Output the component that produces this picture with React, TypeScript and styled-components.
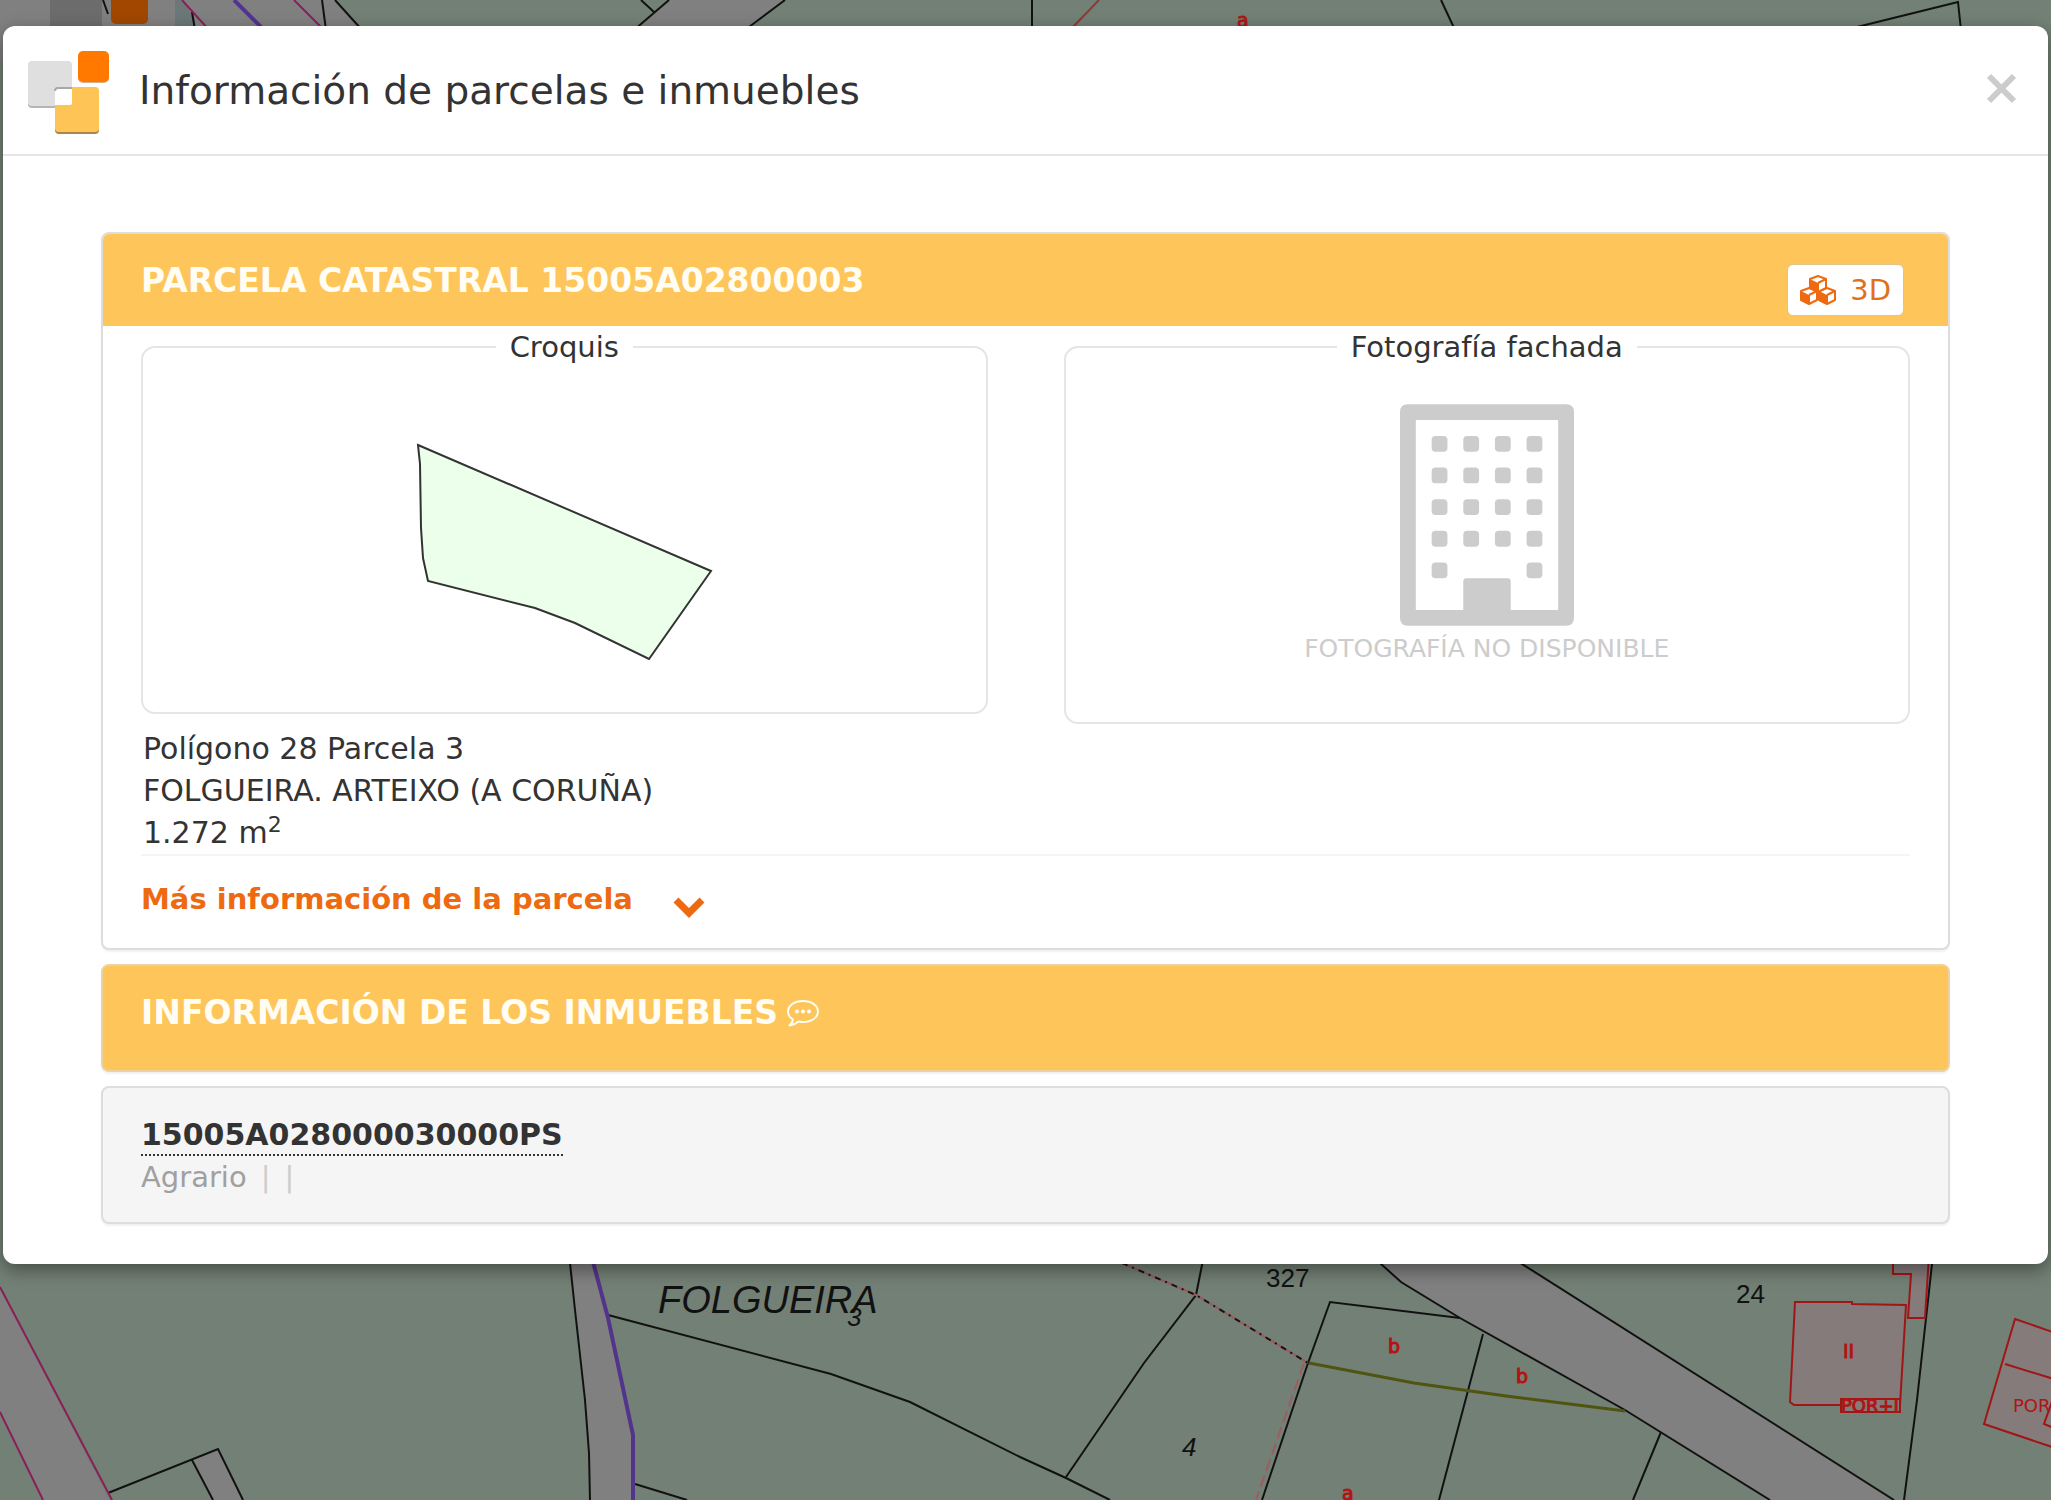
import React from "react";
import styled, { createGlobalStyle } from "styled-components";

const sans = `"DejaVu Sans", Verdana, sans-serif`;

const GlobalStyle = createGlobalStyle`
  *, *::before, *::after { box-sizing: border-box; }
  body {
    margin: 0;
    background: #808080;
    color: #333;
    font: 29px/42px ${sans};
  }
`;

const Page = styled.div`
  position: relative;
  min-height: 100vh;
  overflow: hidden;
`;

const MapLayer = styled.svg`
  position: absolute;
  inset: 0;
  width: 100%;
  height: 100%;
  font-family: "Liberation Sans", Arial, sans-serif;
`;

const Dialog = styled.div`
  position: relative;
  margin: 26px 3px;
  background: #fff;
  border-radius: 12px;
  box-shadow: 0 6px 18px rgba(0, 0, 0, 0.4);
`;

const DialogHeader = styled.header`
  display: flex;
  align-items: flex-start;
  gap: 28px;
  padding: 22px 30px 18px 24px;
  border-bottom: 2px solid #e5e5e5;
`;

const Logo = styled.svg`
  flex: none;
  width: 84px;
  height: 88px;
`;

const Title = styled.h1`
  flex: 1;
  margin: 0;
  padding-top: 16px;
  font-size: 39px;
  font-weight: 400;
  line-height: 54px;
`;

const CloseButton = styled.button`
  display: flex;
  margin-top: 24px;
  padding: 0;
  border: 0;
  background: none;
  color: #ccc;
  cursor: pointer;
`;

const DialogBody = styled.main`
  display: flex;
  flex-direction: column;
  gap: 14px;
  padding: 76px 98px 40px;
`;

const Panel = styled.section<{ $tone?: "plain" | "muted" | "accent" }>`
  overflow: hidden;
  border: 2px solid ${(p) => (p.$tone === "accent" ? "#ecd2a0" : "#ddd")};
  border-radius: 8px;
  background: ${(p) => (p.$tone === "accent" ? "#fec65a" : p.$tone === "muted" ? "#f5f5f5" : "#fff")};
  box-shadow: 0 2px 2px rgba(0, 0, 0, 0.06);
`;

const PanelHeading = styled.div<{ $tall?: boolean }>`
  display: flex;
  justify-content: space-between;
  align-items: flex-start;
  padding: ${(p) => (p.$tall ? "26px 44px 36px 38px" : "26px 44px 24px 38px")};
  background: #fec65a;
`;

const PanelTitle = styled.h2`
  display: flex;
  align-items: center;
  gap: 8px;
  margin: 0;
  color: #fffdf4;
  font-size: 33px;
  line-height: 42px;
`;

const ViewButton = styled.button`
  display: flex;
  align-items: center;
  gap: 14px;
  height: 52px;
  margin: 4px 0 -14px;
  padding: 0 12px;
  border: 1px solid #e0c48c;
  border-radius: 6px;
  background: #fff;
  color: #e0701c;
  font: 29px/42px ${sans};
  cursor: pointer;
`;

const PanelBody = styled.div`
  padding: 0 38px 28px;
`;

const Figures = styled.div`
  display: grid;
  grid-template-columns: 1fr 1fr;
  align-items: start;
  gap: 76px;
`;

const Figure = styled.fieldset<{ $height: number }>`
  display: flex;
  flex-direction: column;
  align-items: center;
  min-width: 0;
  height: ${(p) => p.$height}px;
  margin: 0;
  padding: 36px 0 0;
  border: 2px solid #e5e5e5;
  border-radius: 14px;
`;

const Legend = styled.legend`
  margin: 0 auto;
  padding: 0 14px;
`;

const Caption = styled.p`
  margin: 0;
  padding-top: 2px;
  color: #ccc;
  font-size: 25px;
`;

const Address = styled.p`
  margin: 0;
  padding: 4px 2px 0;
  border-bottom: 2px solid #f5f5f5;
  font-size: 30px;

  sup {
    font-size: 22px;
    line-height: 0;
  }
`;

const MoreLink = styled.a`
  display: inline-flex;
  align-items: center;
  gap: 40px;
  margin-top: 22px;
  color: #ee6a10;
  font-weight: 700;
  text-decoration: none;

  svg { margin-top: 16px; }
`;

const Property = styled.div`
  padding: 26px 38px 24px;
`;

const PropertyLink = styled.a`
  display: inline-block;
  border-bottom: 2px dotted #333;
  color: #333;
  font-size: 30px;
  font-weight: 700;
  line-height: 38px;
  text-decoration: none;
`;

const PropertyUse = styled.div`
  display: flex;
  gap: 14px;
  color: #a0a0a0;
`;

const Divider = styled.span`
  color: #ccc;
`;

const CadastralMap = () => (
  <MapLayer viewBox="0 0 2051 1500" preserveAspectRatio="xMidYMid slice" aria-hidden="true">
    <rect width="2051" height="1500" fill="#738075" />
    <g fill="#808080">
      <path d="M0 0H335L360 26V60H0Z" />
      <path d="M669 0H785L748 30H634Z" />
      <path d="M0 1287L109 1500H43L0 1412Z" />
      <path d="M192 1460L218 1449L243 1500H213Z" />
      <path d="M570 1263H592L608 1318L633 1435V1500H590L589 1453L585 1400L575 1310Z" />
      <path d="M1360 1240L1401 1282L1460 1318L1625 1410L1770 1500H1894L1520 1263L1480 1240Z" />
    </g>
    <rect x="50" y="0" width="52" height="40" fill="#6c6c6c" />
    <rect x="111" y="-20" width="37" height="44" rx="5" fill="#a14700" />
    <path d="M175 0H182L195 20V40H175Z" fill="#6b7877" />
    <g fill="none" stroke="#111" strokeWidth="2">
      <path d="M103 0L108 14M192 12L195 30M322 0L326 30M335 0L362 30M641 0L654 12M669 0L634 30M785 0L745 30M1032 0V30M1441 0L1455 30M1857 27L1958 2L1961 30" />
      <path d="M570 1263L575 1310L585 1400L589 1453L590 1500M608 1315L831 1374L910 1402L1020 1457L1066 1478L1110 1500M635 1484L687 1500" />
      <path d="M108 1493L218 1449L243 1500M192 1460L213 1500" />
      <path d="M1204 1255L1196 1295L1144 1363L1066 1477" />
      <path d="M1460 1318L1330 1302L1308 1363L1262 1500M1483 1334L1439 1500M1661 1432L1633 1500" />
      <path d="M1360 1245L1401 1282L1460 1318L1625 1410L1770 1500M1500 1250L1894 1500M1933 1255L1917 1400L1904 1500" />
    </g>
    <g fill="none" strokeWidth="2">
      <path d="M1122 1263L1196 1295L1308 1363" stroke="#9a5a5a" />
      <path d="M1122 1263L1196 1295L1308 1363" stroke="#1a1010" strokeDasharray="6 5 2 5" />
      <path d="M1304 1363L1256 1500" stroke="#a05c5c" strokeDasharray="12 5" />
      <path d="M1099 0L1072 28" stroke="#8a3a3a" />
      <path d="M1309 1363L1414 1383L1506 1396L1625 1411" stroke="#4f5410" strokeWidth="3" />
      <path d="M182 0L209 30M294 0L324 30M0 1287L112 1500M0 1412L43 1500" stroke="#8a1f58" />
      <path d="M234 0L266 32M592 1258L608 1318L633 1435V1500" stroke="#53348c" strokeWidth="4" />
    </g>
    <g fill="#857b7b" stroke="#a01616" strokeWidth="2">
      <path d="M1893 1255V1274H1911L1908 1318H1925L1929 1255Z" />
      <path d="M1795 1302H1852V1304L1906 1305L1900 1405H1794L1790 1402Z" />
      <path d="M1841 1399H1900V1412H1841Z" />
      <path d="M2015 1319L2070 1338V1453L1984 1424Z" />
      <path d="M2005 1364L2070 1384" />
      <path d="M2054 1396L2044 1424L2054 1428" />
    </g>
    <g fill="#111" fontSize="26">
      <text x="658" y="1313" fontSize="38" fontStyle="italic">FOLGUEIRA</text>
      <text x="847" y="1326" fontStyle="italic">3</text>
      <text x="1266" y="1287">327</text>
      <text x="1736" y="1303">24</text>
      <text x="1182" y="1456" fontStyle="italic">4</text>
    </g>
    <g fill="#b01414" stroke="#b01414" fontFamily="DejaVu Sans, Verdana, sans-serif" fontSize="19">
      <text x="1388" y="1353">b</text>
      <text x="1516" y="1383">b</text>
      <text x="1342" y="1500">a</text>
      <text x="1237" y="27">a</text>
      <text x="1843" y="1358">II</text>
      <text x="1841" y="1412" fontSize="18">POR+I</text>
      <text x="2013" y="1412" fontSize="18" strokeWidth="0">POR</text>
    </g>
  </MapLayer>
);

const BrandLogo = () => (
  <Logo viewBox="0 0 84 88" aria-hidden="true">
    <rect x="1" y="15" width="44" height="45" rx="4" fill="#b4b4b4" />
    <rect x="1" y="13" width="44" height="45" rx="4" fill="#dfdfdf" />
    <rect x="28" y="42" width="44" height="44" rx="4" fill="#a8864c" />
    <rect x="28" y="39" width="44" height="45" rx="4" fill="#fec556" />
    <path d="M30 41H45V55Q45 57 43 57H28V43Q28 41 30 41Z" fill="#fff" />
    <path d="M28 43Q28 40 31 40H45" fill="none" stroke="#a8a8a8" strokeWidth="2" />
    <rect x="51" y="5" width="31" height="30" rx="5" fill="#d9b08c" />
    <rect x="51" y="3" width="31" height="31" rx="5" fill="#ff7800" />
  </Logo>
);

const Cube = ({ x, y }: { x: number; y: number }) => (
  <g transform={`translate(${x} ${y})`}>
    <path d="M9 1L17 4V13L9 17L1 13V4Z" fill="#fff" stroke="currentColor" strokeWidth="2" strokeLinejoin="round" />
    <path d="M1 4L9 8V17L1 13Z" fill="currentColor" />
    <path d="M9 8L17 4M9 8V17" stroke="currentColor" strokeWidth="2" />
  </g>
);

const CubesIcon = () => (
  <svg width="36" height="30" viewBox="0 0 36 30" aria-hidden="true" color="#ee6a10">
    <Cube x={0} y={12} />
    <Cube x={18} y={12} />
    <Cube x={9} y={0} />
  </svg>
);

const CommentIcon = () => (
  <svg width="34" height="28" viewBox="0 0 34 28" aria-hidden="true">
    <path
      d="M17 2C25.500 2 32 6.500 32 12.500S25.500 23 17 23Q14.500 23 12.500 22.500Q8.500 26 3.500 26.500Q6.500 24 7 20.500Q2 17.500 2 12.500C2 6.500 8.500 2 17 2Z"
      fill="none"
      stroke="currentColor"
      strokeWidth="2"
      strokeLinejoin="round"
    />
    <g fill="currentColor">
      <circle cx="11" cy="12.500" r="2" />
      <circle cx="17" cy="12.500" r="2" />
      <circle cx="23" cy="12.500" r="2" />
    </g>
  </svg>
);

const windowCells = [2, 4, 6, 8, 10].flatMap((y) =>
  [2, 4, 6, 8].filter((x) => y < 10 || x === 2 || x === 8).map((x) => ({ x, y })),
);

const BuildingIcon = () => (
  <svg width="174" height="222" viewBox="0 0 11 14" fill="#ccc" aria-hidden="true">
    <path
      fillRule="evenodd"
      d="M.5 0H10.500Q11 0 11 .5V13.500Q11 14 10.500 14H.5Q0 14 0 13.500V.5Q0 0 .5 0ZM1 1V13H4V11.200Q4 11 4.200 11H6.800Q7 11 7 11.200V13H10V1Z"
    />
    {windowCells.map(({ x, y }) => (
      <rect key={`${x}-${y}`} x={x} y={y} width="1" height="1" rx=".25" />
    ))}
  </svg>
);

const ParcelSketch = () => (
  <svg width="300" height="222" viewBox="415 441 300 222" role="img" aria-label="Croquis">
    <path
      d="M419 445L712 571L650 659L576 623L536 608L429 581L424 558L422 528L421 464Z"
      fill="#ebffeb"
      stroke="#333"
      strokeWidth="2"
    />
  </svg>
);

const SketchArea = styled.div`
  display: flex;
  padding-top: 37px;
`;

export default function App() {
  return (
    <Page>
      <GlobalStyle />
      <CadastralMap />
      <Dialog role="dialog" aria-labelledby="dialog-title">
        <DialogHeader>
          <BrandLogo />
          <Title id="dialog-title">Información de parcelas e inmuebles</Title>
          <CloseButton type="button" aria-label="Cerrar">
            <svg width="36" height="36" viewBox="0 0 36 36" aria-hidden="true">
              <path d="M7 4L32 29M32 4L7 29" stroke="currentColor" strokeWidth="6" />
            </svg>
          </CloseButton>
        </DialogHeader>

        <DialogBody>
          <Panel>
            <PanelHeading>
              <PanelTitle>PARCELA CATASTRAL 15005A02800003</PanelTitle>
              <ViewButton type="button">
                <CubesIcon />
                3D
              </ViewButton>
            </PanelHeading>
            <PanelBody>
              <Figures>
                <Figure $height={388}>
                  <Legend>Croquis</Legend>
                  <SketchArea>
                    <ParcelSketch />
                  </SketchArea>
                </Figure>
                <Figure $height={398}>
                  <Legend>Fotografía fachada</Legend>
                  <BuildingIcon />
                  <Caption>FOTOGRAFÍA NO DISPONIBLE</Caption>
                </Figure>
              </Figures>
              <Address>
                Polígono 28 Parcela 3
                <br />
                FOLGUEIRA. ARTEIXO (A CORUÑA)
                <br />
                1.272 m<sup>2</sup>
              </Address>
              <MoreLink href="#parcela">
                Más información de la parcela
                <svg width="32" height="22" viewBox="0 0 32 22" aria-hidden="true">
                  <path d="M3 4L16 17L29 4" fill="none" stroke="currentColor" strokeWidth="7" />
                </svg>
              </MoreLink>
            </PanelBody>
          </Panel>

          <Panel $tone="accent">
            <PanelHeading $tall>
              <PanelTitle>
                INFORMACIÓN DE LOS INMUEBLES
                <CommentIcon />
              </PanelTitle>
            </PanelHeading>
          </Panel>

          <Panel $tone="muted">
            <Property>
              <PropertyLink href="#inmueble">15005A028000030000PS</PropertyLink>
              <PropertyUse>
                Agrario
                <Divider>|</Divider>
                <Divider>|</Divider>
              </PropertyUse>
            </Property>
          </Panel>
        </DialogBody>
      </Dialog>
    </Page>
  );
}
